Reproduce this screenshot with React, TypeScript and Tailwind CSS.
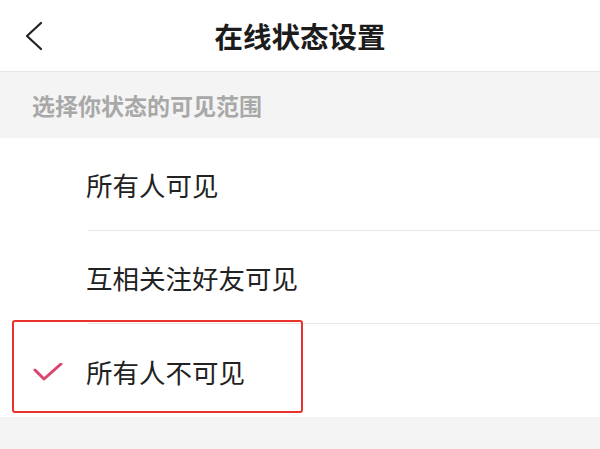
const options = [
    { id: "all", label: "所有人可见" },
    { id: "mutual", label: "互相关注好友可见" },
    { id: "none", label: "所有人不可见" },
];

function BackIcon() {
    return (
        <svg width="20" height="30" viewBox="0 0 20 30" fill="none">
            <polyline points="16,2 2,15 16,28" stroke="#222" strokeWidth="2.2" strokeLinecap="round" strokeLinejoin="round" />
        </svg>
    );
}

export default function App() {
    const selected = "none";

    return (
        <div className="w-[600px] h-[449px] bg-[#f4f4f4] overflow-hidden font-['Noto_Sans_CJK_SC','Noto_Sans',sans-serif]">
            <div className="h-[72px] bg-white border-b border-[#e6e6e6] grid grid-cols-[1fr_auto_1fr] items-center">
                <div className="pl-[25px] flex items-center">
                    <BackIcon />
                </div>
                <h1 className="text-[28.5px] font-bold text-[#1c1c1c] leading-none pt-[2px]">在线状态设置</h1>
                <div />
            </div>

            <div className="h-[66px] px-[32px] flex items-center text-[23px] font-semibold text-[#a8a8a8] leading-none">
                选择你状态的可见范围
            </div>

            <div className="bg-white">
                {options.map((opt, i) => (
                    <div key={opt.id} className="relative h-[93px] flex">
                        <div className="w-[88px] flex items-center pl-[33px] pt-[4px]">
                            {opt.id === selected && (
                                <svg width="30" height="20" viewBox="0 0 30 20" fill="none">
                                    <polyline points="2,7 11,16 28,1" stroke="#d9466f" strokeWidth="3" strokeLinecap="round" strokeLinejoin="round" />
                                </svg>
                            )}
                        </div>
                        <div
                            className={
                                i < options.length - 1
                                    ? "flex-1 flex items-center pt-[3px] border-b border-[#e8e8e8] text-[26.5px] text-[#222] leading-none"
                                    : "flex-1 flex items-center pt-[4px] text-[26.5px] text-[#222] leading-none"
                            }
                        >
                            <span className="-ml-[2px]">{opt.label}</span>
                        </div>
                        {opt.id === selected && (
                            <div className="absolute left-[12px] -top-[4px] w-[291px] h-[93px] border-2 border-[#e8322b] rounded-[3px] pointer-events-none" />
                        )}
                    </div>
                ))}
            </div>
        </div>
    );
}
